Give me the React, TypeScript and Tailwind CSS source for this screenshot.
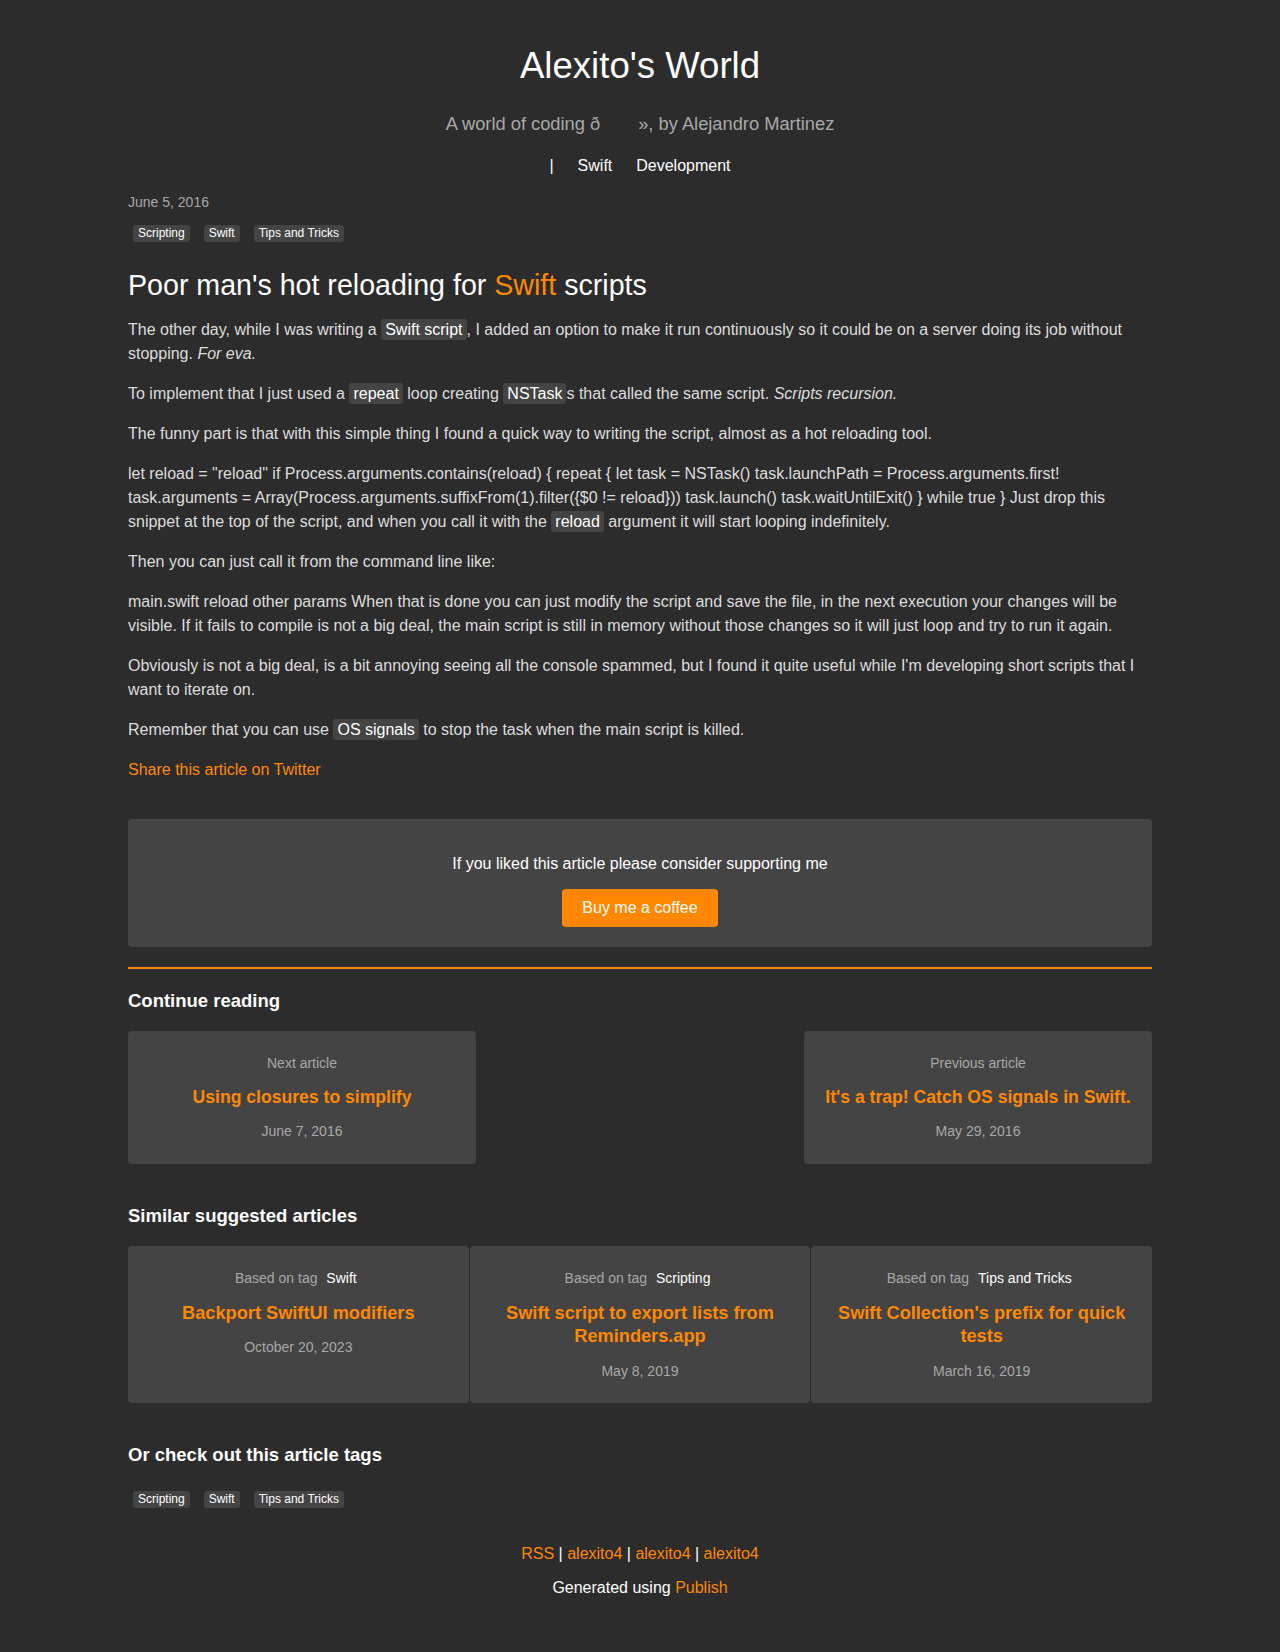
import React from 'react';

const tags = ['Scripting', 'Swift', 'Tips and Tricks'];

const similar = [
  { tag: 'Swift', title: 'Backport SwiftUI modifiers', date: 'October 20, 2023' },
  { tag: 'Scripting', title: 'Swift script to export lists from Reminders.app', date: 'May 8, 2019' },
  { tag: 'Tips and Tricks', title: "Swift Collection's prefix for quick tests", date: 'March 16, 2019' },
];

function Code({ children }: { children: React.ReactNode }) {
  return <code className="bg-[#444] text-white rounded-[3px] px-[4px] py-[2px] font-['Liberation_Sans',Arial,sans-serif]">{children}</code>;
}

function TagList() {
  return (
    <ul className="flex gap-[14px] pl-[5px]">
      {tags.map((t) => (
        <li key={t} className="bg-[#444] text-white text-[12px] leading-[13px] px-[5px] py-[2px] rounded-[3px]">
          {t}
        </li>
      ))}
    </ul>
  );
}

export default function App() {
  return (
    <div className="min-h-[1652px] bg-[#2c2c2c] text-[#ddd] font-['Liberation_Sans',Arial,sans-serif] text-[16px] leading-[24px]">
      {/* Header */}
      <header className="pt-[42px] text-center">
        <h1 className="text-[36.6px] leading-[48px] text-white">Alexito's World</h1>
        <p className="mt-[23px] text-[18.3px] leading-[22px] text-[#a8a8a8]">
          A world of coding ð<span className="inline-block w-[38px]" />», by Alejandro Martinez
        </p>
        <nav className="mt-[21px] flex justify-center gap-[24px] text-white leading-[20px]">
          <span>|</span>
          <a>Swift</a>
          <a>Development</a>
        </nav>
      </header>

      <main className="max-w-[1024px] mx-auto pb-[52px]">
        <div className="mt-[18px] text-[14px] leading-[16px] text-[#a8a8a8]">June 5, 2016</div>
        <div className="mt-[15px]">
          <TagList />
        </div>

        <article>
          <h1 className="mt-[26px] text-[28.6px] leading-[34px] text-white">
            Poor man's hot reloading for <span className="text-[#ff8800]">Swift</span> scripts
          </h1>
          <div className="mt-[16px] flex flex-col gap-[16px]">
            <p>
              The other day, while I was writing a <Code>Swift script</Code>, I added an option to make it run continuously so it could be on a server doing its job without stopping. <em>For eva.</em>
            </p>
            <p>
              To implement that I just used a <Code>repeat</Code> loop creating <Code>NSTask</Code>s that called the same script. <em>Scripts recursion.</em>
            </p>
            <p>The funny part is that with this simple thing I found a quick way to writing the script, almost as a hot reloading tool.</p>
            <p>
              let reload = "reload" if Process.arguments.contains(reload) {'{'} repeat {'{'} let task = NSTask() task.launchPath = Process.arguments.first! task.arguments = Array(Process.arguments.suffixFrom(1).filter({'{'}$0 != reload{'}'})) task.launch() task.waitUntilExit() {'}'} while true {'}'} Just drop this snippet at the top of the script, and when you call it with the <Code>reload</Code> argument it will start looping indefinitely.
            </p>
            <p>Then you can just call it from the command line like:</p>
            <p>
              main.swift reload other params When that is done you can just modify the script and save the file, in the next execution your changes will be visible. If it fails to compile is not a big deal, the main script is still in memory without those changes so it will just loop and try to run it again.
            </p>
            <p>Obviously is not a big deal, is a bit annoying seeing all the console spammed, but I found it quite useful while I'm developing short scripts that I want to iterate on.</p>
            <p>
              Remember that you can use <Code>OS signals</Code> to stop the task when the main script is killed.
            </p>
            <p>
              <a className="text-[#ff8800]">Share this article on Twitter</a>
            </p>
          </div>
        </article>

        {/* Support */}
        <div className="mt-[37px] bg-[#444] rounded-[4px] h-[128px] pt-[33px] flex flex-col items-center text-white">
          <p>If you liked this article please consider supporting me</p>
          <a className="mt-[13px] h-[38px] px-[20px] flex items-center bg-[#ff8800] rounded-[4px] text-white">Buy me a coffee</a>
        </div>

        <hr className="mt-[20px] border-0 h-[2px] bg-[#ff8800]" />

        <h2 className="mt-[20px] text-[18.5px] leading-[24px] font-bold text-white">Continue reading</h2>
        <div className="mt-[18px] flex justify-between">
          <NavCard label="Next article" title="Using closures to simplify" date="June 7, 2016" />
          <NavCard label="Previous article" title="It's a trap! Catch OS signals in Swift." date="May 29, 2016" />
        </div>

        <h2 className="mt-[40px] text-[18.5px] leading-[24px] font-bold text-white">Similar suggested articles</h2>
        <div className="mt-[18px] grid grid-cols-3 gap-[1px]">
          {similar.map((s) => (
            <div key={s.title} className="bg-[#444] rounded-[4px] px-[24px] pt-[24px] pb-[24px] text-center">
              <div className="text-[14px] leading-[16px] text-[#a8a8a8]">
                Based on tag <span className="text-white px-[5px]">{s.tag}</span>
              </div>
              <div className="mt-[16px] text-[18.2px] leading-[23.4px] font-bold text-[#ff8800]">{s.title}</div>
              <div className="mt-[14px] text-[14px] leading-[16px] text-[#a8a8a8]">{s.date}</div>
            </div>
          ))}
        </div>

        <h2 className="mt-[40px] text-[18.5px] leading-[24px] font-bold text-white">Or check out this article tags</h2>
        <div className="mt-[24px]">
          <TagList />
        </div>

        <footer className="mt-[34px] text-center">
          <p className="text-white">
            <a className="text-[#ff8800]">RSS</a> | <a className="text-[#ff8800]">alexito4</a> | <a className="text-[#ff8800]">alexito4</a> | <a className="text-[#ff8800]">alexito4</a>
          </p>
          <p className="mt-[10px] text-white">
            Generated using <a className="text-[#ff8800]">Publish</a>
          </p>
        </footer>
      </main>
    </div>
  );
}

function NavCard({ label, title, date }: { label: string; title: string; date: string }) {
  return (
    <div className="w-[348px] bg-[#444] rounded-[4px] px-[12px] pt-[24px] pb-[25px] text-center">
      <div className="text-[14px] leading-[16px] text-[#a8a8a8]">{label}</div>
      <div className="mt-[14px] text-[17.6px] leading-[24px] font-bold text-[#ff8800]">{title}</div>
      <div className="mt-[14px] text-[14px] leading-[16px] text-[#a8a8a8]">{date}</div>
    </div>
  );
}
